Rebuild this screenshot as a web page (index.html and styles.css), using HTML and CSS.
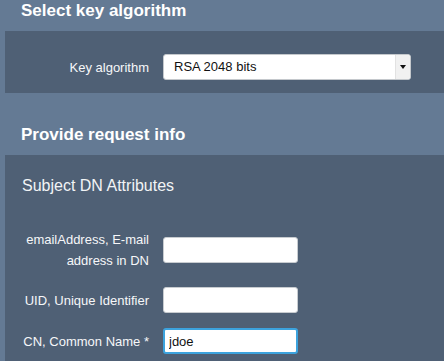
FILE: index.html
```html
<!DOCTYPE html>
<html>
<head>
<meta charset="utf-8">
<link rel="stylesheet" href="styles.css">
</head>
<body>
<h2 class="section-title">Select key algorithm</h2>
<div class="panel panel-algo">
  <div class="row">
    <label class="label">Key algorithm</label>
    <div class="select">
      <span class="select-text">RSA 2048 bits</span>
      <span class="select-arrow"></span>
    </div>
  </div>
</div>
<h2 class="section-title section-title-2">Provide request info</h2>
<div class="panel panel-info">
  <h3 class="sub-title">Subject DN Attributes</h3>
  <div class="rows">
    <div class="row row-email">
      <label class="label">emailAddress, E-mail address in DN</label>
      <input class="text-input" type="text">
    </div>
    <div class="row row-uid">
      <label class="label">UID, Unique Identifier</label>
      <input class="text-input" type="text">
    </div>
    <div class="row row-cn">
      <label class="label">CN, Common Name *</label>
      <input class="text-input text-input-focus" type="text" value="jdoe">
    </div>
  </div>
</div>
</body>
</html>
```

FILE: styles.css
```css
html, body {
  margin: 0;
  padding: 0;
}
body {
  background: #647a94;
  font-family: "Liberation Sans", Arial, sans-serif;
  color: #fff;
  width: 444px;
  height: 361px;
  overflow: hidden;
}
.section-title {
  margin: 0 0 9px 0;
  padding-left: 21px;
  font-size: 17px;
  line-height: 22px;
  font-weight: bold;
  color: #fff;
}
.section-title-2 {
  margin-top: 31px;
}
.panel {
  margin-left: 5px;
  background: #4f6075;
}
.panel-algo {
  padding: 23px 0 13px 0;
}
.panel-info {
  padding: 21px 0 7px 0;
}
.row {
  display: flex;
  align-items: center;
}
.label {
  width: 128px;
  margin-left: 16px;
  margin-right: 14px;
  text-align: right;
  font-size: 13px;
  line-height: 21px;
  color: #f6f7f9;
}
.select {
  width: 248px;
  height: 26px;
  box-sizing: border-box;
  background: #fff;
  border: 1px solid #c4c8cc;
  border-radius: 3px;
  display: flex;
  align-items: stretch;
  overflow: hidden;
}
.select-text {
  flex: 1;
  padding-left: 10px;
  font-size: 13px;
  line-height: 24px;
  color: #111;
}
.select-arrow {
  width: 14px;
  background: #f1f1f1;
  border-left: 1px solid #e2e2e2;
  display: flex;
  align-items: center;
  justify-content: center;
}
.select-arrow::after {
  content: "";
  width: 0;
  height: 0;
  border-left: 3px solid transparent;
  border-right: 3px solid transparent;
  border-top: 4px solid #111;
}
.sub-title {
  margin: 0 0 0 17px;
  font-size: 16px;
  line-height: 20px;
  font-weight: normal;
  color: #f2f4f6;
}
.rows {
  margin-top: 33px;
  display: flex;
  flex-direction: column;
}
.row-uid {
  margin-top: 16px;
}
.row-cn {
  margin-top: 15px;
}
.text-input {
  width: 135px;
  height: 26px;
  box-sizing: border-box;
  margin: 0;
  padding: 0 6px;
  background: #fff;
  border: 1px solid #c8ccd0;
  border-radius: 3px;
  font-family: "Liberation Sans", Arial, sans-serif;
  font-size: 13px;
  color: #111;
  outline: none;
}
.text-input-focus {
  border: 2px solid #3ca3de;
  padding-left: 4px;
}
```
